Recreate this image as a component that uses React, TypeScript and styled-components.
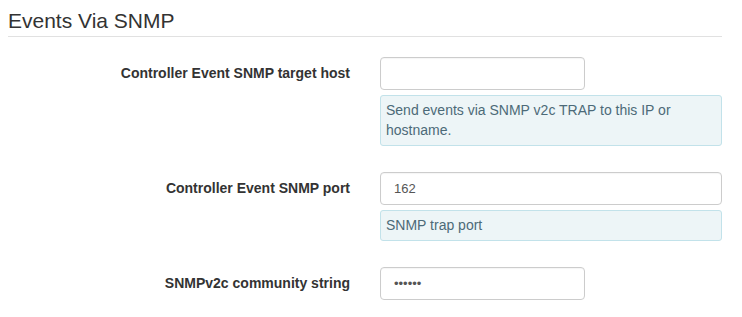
import React from "react";
import styled, { createGlobalStyle } from "styled-components";

interface fieldType {
  label: string,
  value: string,
  type: string,
  wide: boolean,
  help?: string
}

const fields: fieldType[] = [
  {
    label: "Controller Event SNMP target host",
    value: "",
    type: "text",
    wide: false,
    help: "Send events via SNMP v2c TRAP to this IP or hostname."
  },
  {
    label: "Controller Event SNMP port",
    value: "162",
    type: "text",
    wide: true,
    help: "SNMP trap port"
  },
  {
    label: "SNMPv2c community string",
    value: "public",
    type: "password",
    wide: false
  }
];

const App = () => {
  return (
    <>
      <GlobalStyle />
      <Page>
        <Heading>Events Via SNMP</Heading>
        <Form>
          {fields.map((field) => (
            <Row key={field.label}>
              <Label>{field.label}</Label>
              <Control>
                <Input
                  type={field.type}
                  defaultValue={field.value}
                  $wide={field.wide}
                  readOnly
                />
                {field.help && <Help>{field.help}</Help>}
              </Control>
            </Row>
          ))}
        </Form>
      </Page>
    </>
  )
}

export default App;

const GlobalStyle = createGlobalStyle`
  body {
    margin: 0;
    background: #ffffff;
    font-family: "Liberation Sans", Arial, sans-serif;
    color: #333333;
  }
`

const Page = styled.div`
  width: 742px;
  padding: 0 20px 0 8px;
  box-sizing: border-box;
`

const Heading = styled.h2`
  margin: 0;
  padding: 10px 0 5px;
  font-size: 21px;
  font-weight: 400;
  line-height: 21px;
  color: #333333;
  border-bottom: 1px solid #e1e1e1;
`

const Form = styled.div`
  display: flex;
  flex-direction: column;
  gap: 26px;
  padding-top: 20px;
`

const Row = styled.div`
  display: grid;
  grid-template-columns: 1fr 1fr;
  column-gap: 30px;
  align-items: start;
`

const Label = styled.label`
  text-align: right;
  font-size: 14px;
  font-weight: 700;
  line-height: 33px;
  color: #333333;
`

const Control = styled.div`
  display: flex;
  flex-direction: column;
  gap: 5px;
`

const Input = styled.input<{ $wide: boolean }>`
  box-sizing: border-box;
  width: ${props => props.$wide ? "100%" : "205px"};
  height: 33px;
  padding: 0 13px;
  font-family: "Liberation Sans", Arial, sans-serif;
  font-size: 13px;
  color: #555555;
  background: #ffffff;
  border: 1px solid #cccccc;
  border-radius: 4px;
  box-shadow: inset 0 1px 1px rgba(0, 0, 0, 0.04);
  outline: none;
`

const Help = styled.div`
  padding: 4px 5px 5px;
  font-size: 14px;
  line-height: 20px;
  color: #4c6a78;
  background: #edf5f7;
  border: 1px solid #c2e2ea;
  border-radius: 3px;
`
